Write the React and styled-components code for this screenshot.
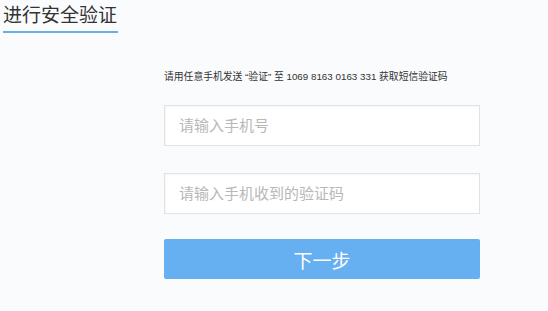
import styled, { createGlobalStyle } from 'styled-components';

const Global = createGlobalStyle`
  html, body {
    margin: 0;
    background: #fafbfd;
    font-family: "Liberation Sans", "Noto Sans CJK SC", sans-serif;
  }
`;

const Page = styled.div`
  width: 548px;
  height: 311px;
  overflow: hidden;
`;

const Header = styled.div`
  padding: 4px 0 0 3px;
`;

const Title = styled.h2`
  display: inline-block;
  margin: 0;
  padding-bottom: 3px;
  font-size: 19px;
  line-height: 24px;
  font-weight: normal;
  color: #333;
  border-bottom: 2px solid #6aaee6;
  width: 115px;
`;

const Form = styled.div`
  width: 316px;
  margin: 37px 0 0 164px;
  display: flex;
  flex-direction: column;
`;

const Hint = styled.p`
  margin: 0 0 21px 0;
  font-size: 9.8px;
  line-height: 14px;
  color: #333;
  white-space: nowrap;
`;

const Field = styled.input`
  box-sizing: border-box;
  height: 41px;
  width: 100%;
  margin-bottom: ${(p) => p.$gap}px;
  padding: 0 14px;
  border: 1px solid #e2e2e2;
  box-shadow: inset 1px 1px 2px rgba(0, 0, 0, 0.04);
  background: #fff;
  font-family: inherit;
  font-size: 15px;
  color: #333;
  outline: none;
  &::placeholder {
    color: #b8b8b8;
  }
`;

const Submit = styled.button`
  height: 40px;
  width: 100%;
  border: none;
  border-radius: 2px;
  background: #66aff0;
  color: #fff;
  font-family: inherit;
  font-size: 19px;
  cursor: pointer;
`;

export default function App() {
  return (
    <Page>
      <Global />
      <Header>
        <Title>进行安全验证</Title>
      </Header>
      <Form>
        <Hint>请用任意手机发送 “验证” 至 1069 8163 0163 331 获取短信验证码</Hint>
        <Field $gap={27} placeholder="请输入手机号" />
        <Field $gap={25} placeholder="请输入手机收到的验证码" />
        <Submit>下一步</Submit>
      </Form>
    </Page>
  );
}
